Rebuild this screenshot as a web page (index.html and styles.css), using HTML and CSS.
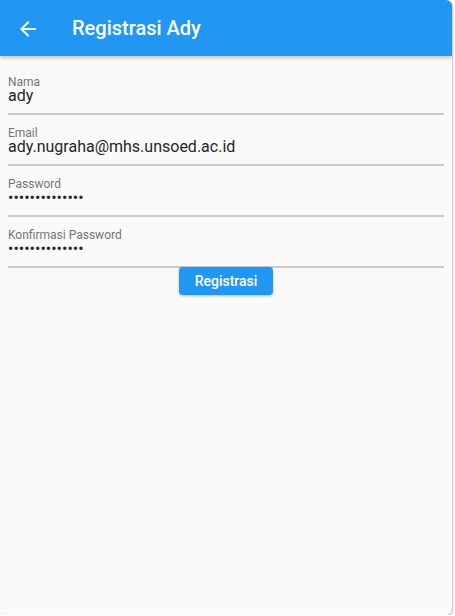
FILE: index.html
```html
<!DOCTYPE html>
<html lang="id">
<head>
<meta charset="utf-8">
<title>Registrasi Ady</title>
<link rel="stylesheet" href="styles.css">
</head>
<body>
<div class="window">
  <header class="appbar">
    <span class="back">
      <svg viewBox="0 0 24 24" width="24" height="24"><path fill="#fff" d="M20 11H7.83l5.59-5.59L12 4l-8 8 8 8 1.41-1.41L7.83 13H20v-2z"/></svg>
    </span>
    <h1 class="title">Registrasi Ady</h1>
  </header>
  <main class="form">
    <div class="field">
      <div class="label">Nama</div>
      <div class="value">ady</div>
    </div>
    <div class="field">
      <div class="label">Email</div>
      <div class="value">ady.nugraha@mhs.unsoed.ac.id</div>
    </div>
    <div class="field">
      <div class="label">Password</div>
      <div class="value dots">••••••••••••••</div>
    </div>
    <div class="field">
      <div class="label">Konfirmasi Password</div>
      <div class="value dots">••••••••••••••</div>
    </div>
    <div class="actions">
      <button class="btn">Registrasi</button>
    </div>
  </main>
</div>
</body>
</html>
```
FILE: styles.css
```css
html, body {
  margin: 0;
  padding: 0;
  background: #ffffff;
  font-family: Roboto, "Liberation Sans", Arial, sans-serif;
}
.window {
  width: 452px;
  height: 615px;
  background: #fafafa;
  border-radius: 0 6px 6px 4px;
  box-shadow: 1px 1px 2px rgba(0,0,0,0.25);
  overflow: hidden;
}
.appbar {
  height: 56px;
  background: #2196f3;
  display: flex;
  align-items: center;
  box-shadow: 0 2px 4px rgba(0,0,0,0.22);
  position: relative;
}
.back {
  width: 24px;
  height: 24px;
  margin-left: 16px;
  margin-top: 2px;
  display: flex;
}
.title {
  margin: 0 0 0 32px;
  font-size: 20px;
  font-weight: 500;
  color: #fff;
  line-height: 56px;
}
.form {
  padding: 8px 8px 0 8px;
}
.field {
  padding-top: 12px;
  border-bottom: 2px solid #cbcbcb;
}
.label {
  font-size: 12px;
  line-height: 12px;
  color: #757575;
}
.value {
  font-size: 16px;
  line-height: 16px;
  margin-bottom: 9px;
  color: #262626;
}
.actions {
  display: flex;
  justify-content: center;
}
.btn {
  margin-top: -1px;
  height: 28px;
  padding: 0 16px;
  border: none;
  border-radius: 4px;
  background: #2196f3;
  color: #fff;
  font-family: Roboto, "Liberation Sans", Arial, sans-serif;
  font-size: 14px;
  font-weight: 500;
  box-shadow: 0 1px 3px rgba(0,0,0,0.25);
}
```
